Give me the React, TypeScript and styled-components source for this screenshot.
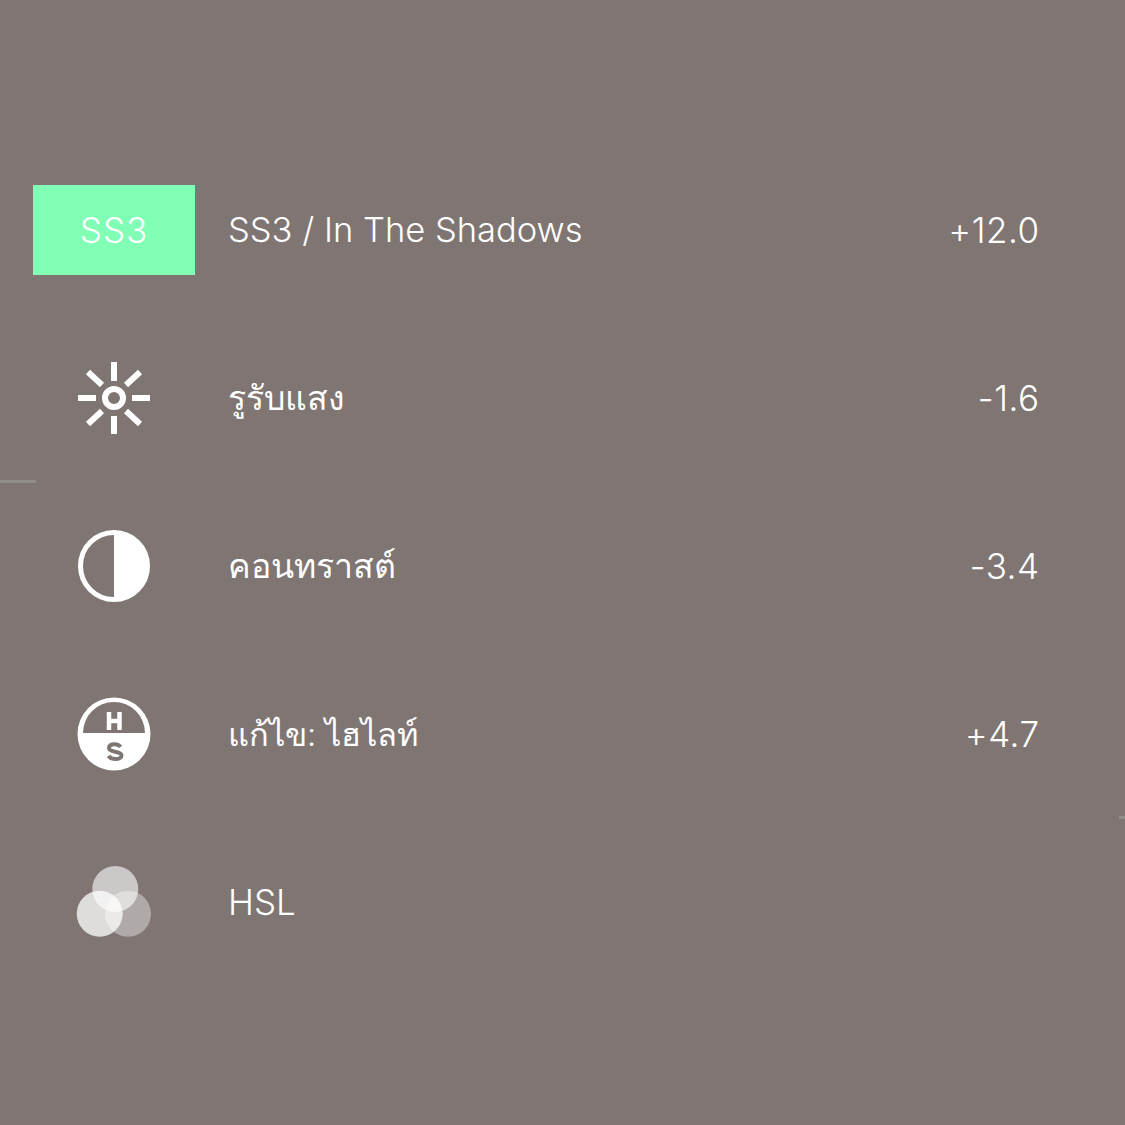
import React from "react";
import styled, { createGlobalStyle } from "styled-components";

const Global = createGlobalStyle`
  html, body { margin: 0; padding: 0; background: #7f7673; }
`;

const Page = styled.main`
  position: relative;
  width: 1125px;
  height: 1125px;
  box-sizing: border-box;
  padding: 185px 87px 0 33px;
  background: #7f7673;
  overflow: hidden;
  color: #fff;
  font-family: Inter, "Noto Sans", "DejaVu Sans", sans-serif;
  font-weight: 300;
`;

const List = styled.div`
  display: flex;
  flex-direction: column;
  gap: 78px;
`;

const Row = styled.div`
  display: flex;
  align-items: center;
  height: 90px;
`;

const IconSlot = styled.div<{ $active?: boolean }>`
  display: flex;
  align-items: center;
  justify-content: center;
  flex: none;
  width: 162px;
  height: 90px;
  font-size: 35px;
  letter-spacing: 1px;
  background: ${(p) => (p.$active ? "#80ffb5" : "transparent")};
`;

const Label = styled.div<{ $size: number }>`
  flex: 1;
  margin-left: 33px;
  font-size: ${(p) => p.$size}px;
  line-height: 40px;
  white-space: nowrap;
`;

const Value = styled.div`
  margin-right: -1.5px;
  font-size: 35px;
  letter-spacing: 0.5px;
  line-height: 40px;
  text-align: right;
`;

const Tick = styled.div<{ $side: "left" | "right"; $top: number; $width: number }>`
  position: absolute;
  top: ${(p) => p.$top}px;
  ${(p) => p.$side}: 0;
  width: ${(p) => p.$width}px;
  height: 3px;
  background: #928c89;
`;

const Exposure = () => (
  <svg width="74" height="74" viewBox="0 0 74 74" fill="none" stroke="#fff">
    <circle cx="37" cy="37" r="9" strokeWidth="6" />
    <g strokeWidth="6">
      <path d="M37 1v19M37 55v18M1 37h18M55 37h18" />
      <path d="M11 11l14 13M63 11L49 24M11 63l14-13M63 63L49 50" />
    </g>
  </svg>
);

const Contrast = () => (
  <svg width="74" height="74" viewBox="0 0 74 74">
    <circle cx="37" cy="37" r="33.500" fill="none" stroke="#fff" strokeWidth="5" />
    <path d="M37 3.500a33.500 33.500 0 0 1 0 67z" fill="#fff" />
  </svg>
);

const HslBadge = () => (
  <svg width="74" height="74" viewBox="0 0 74 74">
    <circle cx="37" cy="37" r="36.500" fill="#fff" />
    <path d="M6 36a31 31 0 0 1 62 0z" fill="#7f7673" />
    <path d="M32 15v18M42.500 15v18M32 24h10.500" stroke="#fff" strokeWidth="4.500" fill="none" />
    <path
      d="M43.500 50c-1-1.800-3.200-2.800-6-2.800-3.300 0-5.500 1.400-5.500 3.800 0 5 12.500 2.400 12.500 7.400 0 2.300-2.500 3.700-6 3.700-3.200 0-5.700-1.200-6.800-3.300"
      stroke="#7f7673"
      strokeWidth="4"
      fill="none"
    />
  </svg>
);

const Circles = () => (
  <svg width="76" height="74" viewBox="0 0 76 74" fill="#fff">
    <circle cx="39.300" cy="24" r="23" opacity="0.6" />
    <circle cx="52" cy="48.700" r="23" opacity="0.38" />
    <circle cx="23.700" cy="48.700" r="23" opacity="0.75" />
  </svg>
);

const rows: {
  icon: React.ReactNode;
  label: string;
  size: number;
  value?: string;
  active?: boolean;
}[] = [
  { icon: "SS3", label: "SS3 / In The Shadows", size: 34.5, value: "+12.0", active: true },
  { icon: <Exposure />, label: "รูรับแสง", size: 33.8, value: "-1.6" },
  { icon: <Contrast />, label: "คอนทราสต์", size: 33.8, value: "-3.4" },
  { icon: <HslBadge />, label: "แก้ไข: ไฮไลท์", size: 32.6, value: "+4.7" },
  { icon: <Circles />, label: "HSL", size: 35 },
];

export default function App() {
  return (
    <Page>
      <Global />
      <Tick $side="left" $top={480} $width={36} />
      <Tick $side="right" $top={816} $width={6} />
      <List>
        {rows.map((r) => (
          <Row key={r.label}>
            <IconSlot $active={r.active}>{r.icon}</IconSlot>
            <Label $size={r.size}>{r.label}</Label>
            {r.value && <Value>{r.value}</Value>}
          </Row>
        ))}
      </List>
    </Page>
  );
}
